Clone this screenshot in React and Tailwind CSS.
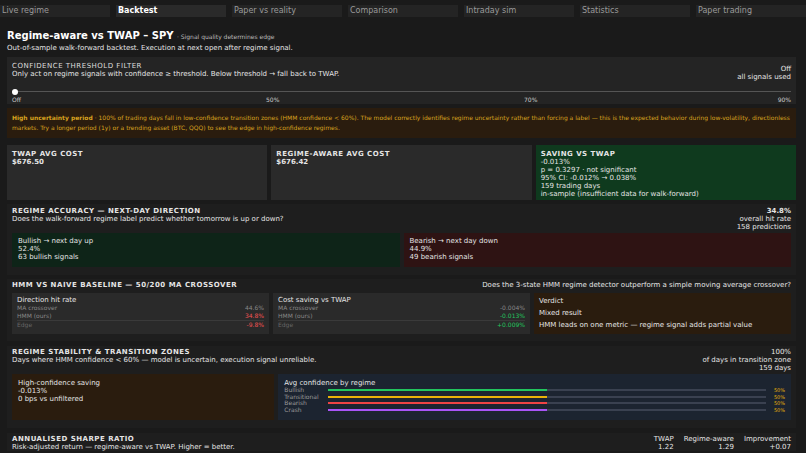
export default function App() {
  const tabs = ["Live regime", "Backtest", "Paper vs reality", "Comparison", "Intraday sim", "Statistics", "Paper trading"];
  const bars = [
    ["Bullish", "bg-[#22c55e]"],
    ["Transitional", "bg-[#eab308]"],
    ["Bearish", "bg-[#ef4444]"],
    ["Crash", "bg-[#a855f7]"],
  ];
  return (
    <div className="w-[806px] h-[453px] overflow-hidden bg-[#1a1a1a] text-[#e5e5e5] text-[7px] leading-[8px]" style={{ fontFamily: '"DejaVu Sans", sans-serif' }}>
      <div className="flex gap-[6px] pt-[5px] h-[17px]">
        {tabs.map((t) => (
          <div key={t} className={`flex-1 flex items-center px-[2px] h-[12px] text-[8px] ${t === "Backtest" ? "bg-[#2a2a2a] text-white font-bold" : "bg-[#242424] text-[#9a9a9a]"}`}>{t}</div>
        ))}
      </div>
      <div className="px-[7px] pt-[13px] pr-[10px]">
        <div className="text-[10px] leading-[12px] font-bold text-white">Regime-aware vs TWAP – SPY <span className="text-[6px] font-normal text-[#bbb]">· Signal quality determines edge</span></div>
        <div className="mt-[1px]">Out-of-sample walk-forward backtest. Execution at next open after regime signal.</div>

        <div className="mt-[5px] bg-[#242424] px-[5px] pt-[5px] h-[47px]">
          <div className="flex justify-between">
            <div>
              <div className="tracking-[0.5px] text-[#ddd]">CONFIDENCE THRESHOLD FILTER</div>
              <div>Only act on regime signals with confidence ≥ threshold. Below threshold → fall back to TWAP.</div>
            </div>
            <div className="text-right pt-[3px]"><div>Off</div><div>all signals used</div></div>
          </div>
          <div className="relative mt-[10px] h-[1px] bg-[#555]">
            <div className="absolute -top-[2px] left-0 w-[6px] h-[6px] rounded-full bg-white" />
          </div>
          <div className="flex mt-[4px] text-[6px] text-[#ccc]">
            <span className="w-[254px]">Off</span><span className="w-[258px]">50%</span><span className="flex-1">70%</span><span>90%</span>
          </div>
        </div>

        <div className="mt-[4px] bg-[#2a1c0e] px-[5px] py-[5px] text-[6px] leading-[10px] text-[#d9a31f] h-[30px]">
          <b>High uncertainty period</b> · 100% of trading days fall in low-confidence transition zones (HMM confidence &lt; 60%). The model correctly identifies regime uncertainty rather than forcing a label — this is the expected behavior during low-volatility, directionless markets. Try a longer period (1y) or a trending asset (BTC, QQQ) to see the edge in high-confidence regimes.
        </div>

        <div className="mt-[7px] flex gap-[4px] h-[55px]">
          <div className="flex-1 bg-[#2a2a2a] p-[5px] font-bold"><div className="tracking-[0.5px]">TWAP AVG COST</div><div>$676.50</div></div>
          <div className="flex-1 bg-[#2a2a2a] p-[5px] font-bold"><div className="tracking-[0.5px]">REGIME-AWARE AVG COST</div><div>$676.42</div></div>
          <div className="flex-1 bg-[#0f3a1e] p-[5px]"><div className="tracking-[0.5px] font-bold">SAVING VS TWAP</div><div>-0.013%</div><div>p = 0.3297 · not significant</div><div>95% CI: -0.012% → 0.038%</div><div>159 trading days</div><div>in-sample (insufficient data for walk-forward)</div></div>
        </div>

        <div className="mt-[4px] bg-[#1e1e1e] px-[5px] pt-[3px] h-[71px]">
          <div className="flex justify-between">
            <div><div className="tracking-[0.5px] font-bold">REGIME ACCURACY — NEXT-DAY DIRECTION</div><div>Does the walk-forward regime label predict whether tomorrow is up or down?</div></div>
            <div className="text-right"><div className="font-bold">34.8%</div><div>overall hit rate</div><div>158 predictions</div></div>
          </div>
          <div className="flex gap-[4px] mt-[2px] h-[34px]">
            <div className="flex-1 bg-[#0e2418] px-[6px] py-[4px]"><div>Bullish → next day up</div><div>52.4%</div><div>63 bullish signals</div></div>
            <div className="flex-1 bg-[#2e1313] px-[6px] py-[4px]"><div>Bearish → next day down</div><div>44.9%</div><div>49 bearish signals</div></div>
          </div>
        </div>

        <div className="mt-[4px] bg-[#1e1e1e] px-[5px] pt-[2px] h-[62px]">
          <div className="flex justify-between"><div className="tracking-[0.5px] font-bold">HMM VS NAIVE BASELINE — 50/200 MA CROSSOVER</div><div>Does the 3-state HMM regime detector outperform a simple moving average crossover?</div></div>
          <div className="flex gap-[4px] mt-[4px] h-[41px]">
            <div className="flex-1 bg-[#2a2a2a] px-[5px] py-[3px]">
              <div>Direction hit rate</div>
              <div className="flex justify-between text-[#888] text-[6px]"><span>MA crossover</span><span>44.6%</span></div>
              <div className="flex justify-between text-[#888] text-[6px]"><span>HMM (ours)</span><span className="text-[#f05252]">34.8%</span></div>
              <div className="flex justify-between text-[#666] text-[6px] border-t border-[#3a3a3a]"><span>Edge</span><span className="text-[#f05252]">-9.8%</span></div>
            </div>
            <div className="flex-1 bg-[#2a2a2a] px-[5px] py-[3px]">
              <div>Cost saving vs TWAP</div>
              <div className="flex justify-between text-[#888] text-[6px]"><span>MA crossover</span><span>-0.004%</span></div>
              <div className="flex justify-between text-[#888] text-[6px]"><span>HMM (ours)</span><span className="text-[#22c55e]">-0.013%</span></div>
              <div className="flex justify-between text-[#666] text-[6px] border-t border-[#3a3a3a]"><span>Edge</span><span className="text-[#22c55e]">+0.009%</span></div>
            </div>
            <div className="flex-1 bg-[#2a1c0e] px-[5px] py-[4px] flex flex-col gap-[4px]"><div>Verdict</div><div>Mixed result</div><div>HMM leads on one metric — regime signal adds partial value</div></div>
          </div>
        </div>

        <div className="mt-[5px] bg-[#1e1e1e] px-[5px] pt-[2px] h-[82px]">
          <div className="flex justify-between">
            <div><div className="tracking-[0.5px] font-bold">REGIME STABILITY &amp; TRANSITION ZONES</div><div>Days where HMM confidence &lt; 60% — model is uncertain, execution signal unreliable.</div></div>
            <div className="text-right"><div>100%</div><div>of days in transition zone</div><div>159 days</div></div>
          </div>
          <div className="flex gap-[4px] mt-[2px] h-[46px]">
            <div className="flex-1 bg-[#2a1c0e] px-[6px] py-[5px]"><div>High-confidence saving</div><div>-0.013%</div><div>0 bps vs unfiltered</div></div>
            <div className="flex-[2] bg-[#1c2430] px-[6px] py-[5px]">
              <div>Avg confidence by regime</div>
              {bars.map(([n, c]) => (
                <div key={n} className="flex items-center h-[6.5px] text-[6px] text-[#999]">
                  <span className="w-[44px]">{n}</span>
                  <div className="flex-1 h-[2px] bg-[#3a4150]"><div className={`h-full w-1/2 ${c}`} /></div>
                  <span className="w-[19px] text-right text-[#eab308] text-[5px]">50%</span>
                </div>
              ))}
            </div>
          </div>
        </div>

        <div className="mt-[5px] bg-[#1e1e1e] px-[5px] pt-[2px] flex justify-between">
          <div><div className="tracking-[0.5px] font-bold">ANNUALISED SHARPE RATIO</div><div>Risk-adjusted return — regime-aware vs TWAP. Higher = better.</div></div>
          <div className="flex gap-[10px] text-right"><div><div>TWAP</div><div>1.22</div></div><div><div>Regime-aware</div><div>1.29</div></div><div><div>Improvement</div><div>+0.07</div></div></div>
        </div>
      </div>
    </div>
  );
}
